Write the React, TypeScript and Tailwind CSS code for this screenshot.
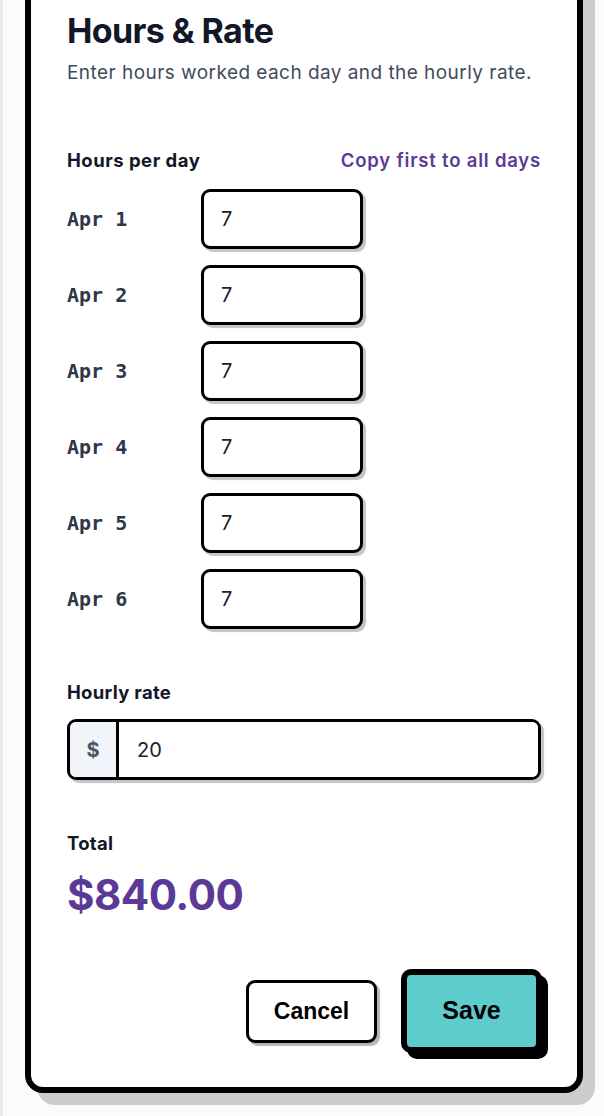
import React from "react";

const days = ["Apr 1", "Apr 2", "Apr 3", "Apr 4", "Apr 5", "Apr 6"];

export default function App() {
  return (
    <div
      className="min-h-screen w-full bg-[#fbfbfb] border-l-[3px] border-[#e6ebf2] pl-[22px] pr-[21px] overflow-hidden"
      style={{ fontFamily: "Inter, 'Noto Sans', sans-serif" }}
    >
      <div className="-mt-[40px] w-[558px] rounded-[18px] border-[6px] border-black bg-white px-[36px] pt-[45px] pb-[34px] shadow-[12px_12px_0_#cccccc]">
        <h1 className="text-[34px] leading-[40px] font-bold tracking-[-0.6px] text-[#121829]">
          Hours &amp; Rate
        </h1>
        <p className="mt-[8px] text-[19px] leading-[28px] tracking-[0.45px] text-[#414b5c]">
          Enter hours worked each day and the hourly rate.
        </p>

        <div className="mt-[61px] flex items-center justify-between">
          <span className="text-[18.5px] leading-[24px] font-bold tracking-[0.5px] text-[#121829]">
            Hours per day
          </span>
          <button className="text-[18.5px] leading-[24px] font-semibold tracking-[0.8px] text-[#5b3a98]">
            Copy first to all days
          </button>
        </div>

        <div className="mt-[17px] flex flex-col gap-[16px]">
          {days.map((d) => (
            <div key={d} className="flex items-center">
              <span
                className="w-[134px] text-[20px] font-bold text-[#2d3748]"
                style={{ fontFamily: "'DejaVu Sans Mono', monospace" }}
              >
                {d}
              </span>
              <div className="flex h-[60px] w-[162px] items-center rounded-[9px] border-[3px] border-black bg-white pl-[17px] text-[20px] text-[#1a202c] shadow-[3px_3px_1px_#c4c4c4]">
                7
              </div>
            </div>
          ))}
        </div>

        <div className="mt-[51px] text-[18.5px] leading-[24px] font-bold tracking-[0.3px] text-[#121829]">
          Hourly rate
        </div>
        <div className="mt-[15px] flex h-[61px] overflow-hidden rounded-[9px] border-[3px] border-black shadow-[3px_3px_1px_#c4c4c4]">
          <div className="flex w-[49px] items-center justify-center border-r-[3px] border-black bg-[#f1f4f9] text-[20px] font-bold text-[#4a5568]">
            $
          </div>
          <div className="flex flex-1 items-center bg-white pl-[18px] text-[20px] text-[#1a202c]">
            20
          </div>
        </div>

        <div className="mt-[51px] text-[18.5px] leading-[24px] font-bold tracking-[0.3px] text-[#121829]">
          Total
        </div>
        <div className="mt-[14px] text-[42px] leading-[52px] font-bold tracking-[-0.5px] text-[#5b3a96]">
          $840.00
        </div>

        <div
          className="mt-[48px] flex items-center justify-end gap-[24px] pr-0"
          style={{ fontFamily: "'Liberation Sans', Arial, sans-serif" }}
        >
          <button className="h-[63px] w-[131px] rounded-[9px] border-[3px] border-black bg-white text-[23px] font-bold text-black shadow-[3px_3px_1px_#b5b5b5]">
            Cancel
          </button>
          <button className="mr-[-1px] h-[84px] w-[141px] rounded-[10px] border-[6px] border-black bg-[#5ecbcc] text-[25px] font-bold text-black shadow-[6px_6px_0_#000000]">
            Save
          </button>
        </div>
      </div>
    </div>
  );
}
